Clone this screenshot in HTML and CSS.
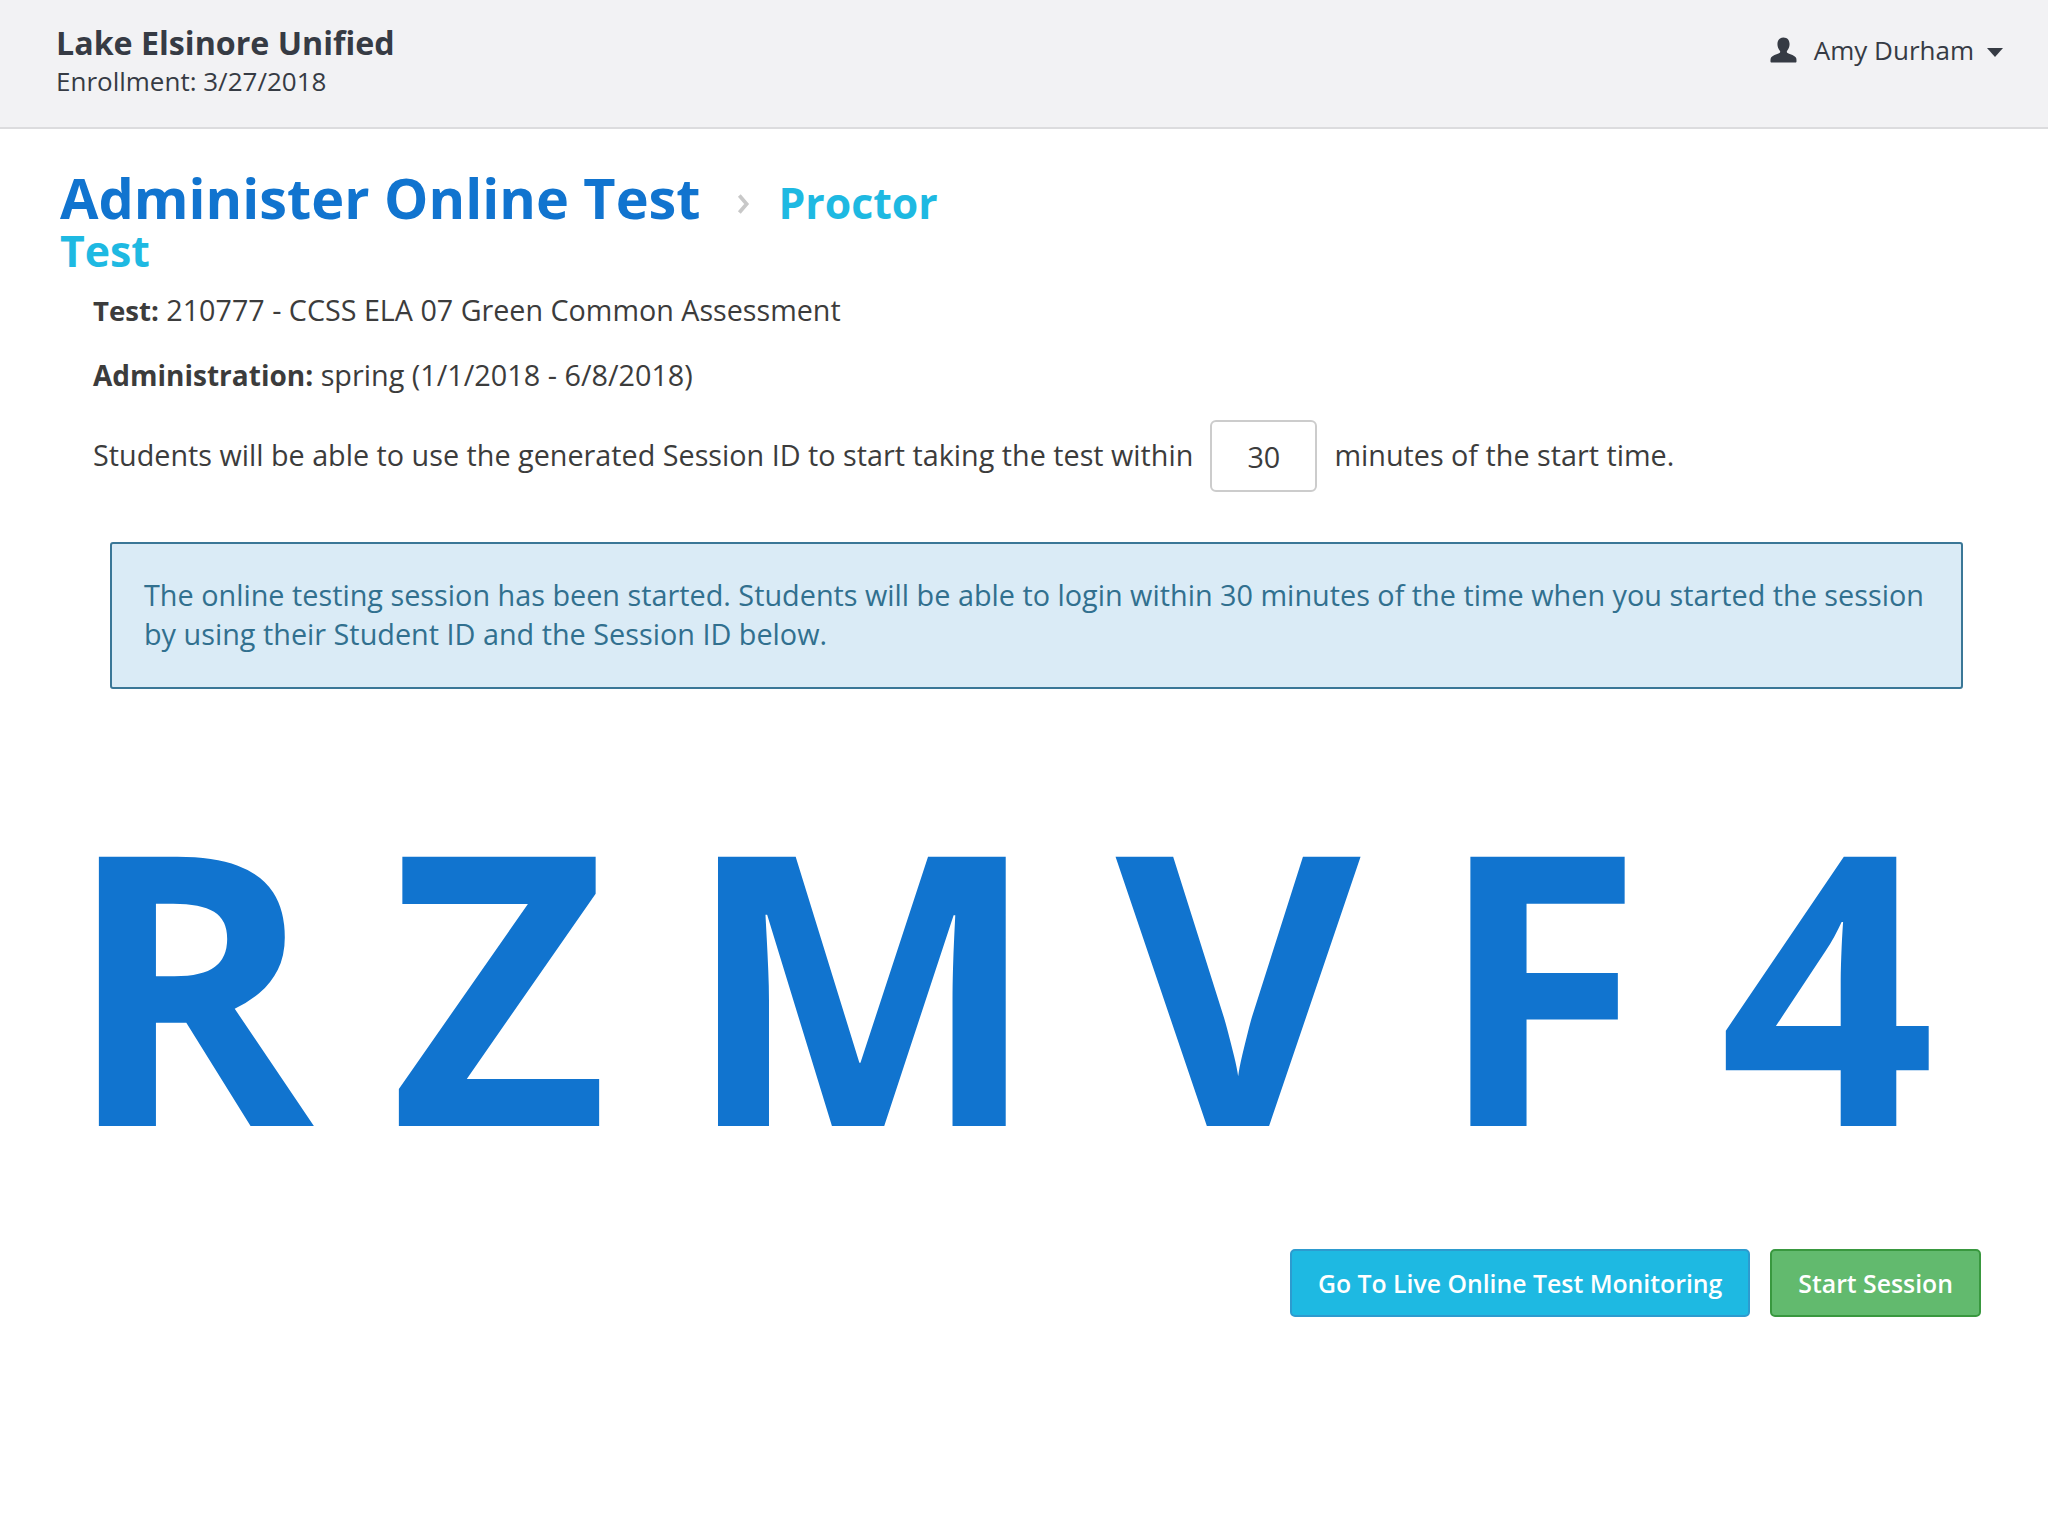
FILE: index.html
```html
<!DOCTYPE html>
<html lang="en">
<head>
<meta charset="utf-8">
<title>Administer Online Test</title>
<link rel="stylesheet" href="styles.css">
</head>
<body>
<header class="topbar">
  <div class="org">
    <div class="org-name">Lake Elsinore Unified</div>
    <div class="org-sub">Enrollment: 3/27/2018</div>
  </div>
  <div class="user">
    <svg class="user-icon" viewBox="0 0 28 26" aria-hidden="true"><path d="M14 0c4 0 6.300 2.900 6.300 6.800 0 2.800-1 5.200-2.500 6.900-.6.700-.5 2 .4 2.500 2.400 1.300 8.100 2.700 9 5.300.3.900.3 2.700.3 3.500 0 .5-.4 1-1 1H1.500c-.6 0-1-.5-1-1 0-.8 0-2.600.3-3.500.9-2.600 6.600-4 9-5.300.9-.5 1-1.800.4-2.500-1.500-1.700-2.500-4.100-2.500-6.900C7.700 2.900 10 0 14 0z"/></svg>
    <span class="user-name">Amy Durham</span>
    <span class="caret"></span>
  </div>
</header>
<main class="page">
  <h1 class="title">
    <span class="title-main">Administer Online Test</span>
    <svg class="crumb" viewBox="0 0 10 18" aria-hidden="true"><path d="M2 2l6 7-6 7"/></svg>
    <span class="title-sub">Proctor Test</span>
  </h1>
  <section class="details">
    <p class="line-test"><b>Test:</b> 210777 - CCSS ELA 07 Green Common Assessment</p>
    <p class="line-admin"><b>Administration:</b> spring (1/1/2018 - 6/8/2018)</p>
    <div class="line-window">
      <span class="window-text">Students will be able to use the generated Session ID to start taking the test within</span>
      <span class="minutes">30</span>
      <span class="window-text">minutes of the start time.</span>
    </div>
  </section>
  <div class="alert">The online testing session has been started. Students will be able to login within 30 minutes of the time when you started the session by using their Student ID and the Session ID below.</div>
  <div class="session-id">
    <span>R</span><span>Z</span><span>M</span><span>V</span><span>F</span><span>4</span>
  </div>
  <div class="actions">
    <a class="btn btn-info">Go To Live Online Test Monitoring</a>
    <a class="btn btn-success">Start Session</a>
  </div>
</main>
</body>
</html>
```

FILE: styles.css
```css
* { box-sizing: border-box; }
html, body { margin: 0; padding: 0; }
body {
  width: 2048px;
  height: 1524px;
  background: #fff;
  color: #3c3c3c;
  font-family: "Open Sans", "Noto Sans", sans-serif;
  font-size: 28.7px;
  overflow: hidden;
}
.topbar {
  height: 129px;
  background: #f2f2f4;
  border-bottom: 2px solid #dcdcde;
  padding: 23px 45px 0 56px;
  display: flex;
  justify-content: space-between;
  align-items: flex-start;
  color: #363b44;
}
.org-name { font-size: 32.2px; font-weight: 700; line-height: 40px; }
.org-sub { font-size: 26px; line-height: 34px; margin-top: 1px; }
.user { display: flex; align-items: center; margin-top: 5px; height: 44px; font-size: 26px; }
.user-icon { width: 27px; height: 26px; fill: #363b44; margin-right: 17px; }
.caret {
  margin-left: 13px;
  margin-top: 4px;
  border-left: 8.500px solid transparent;
  border-right: 8.500px solid transparent;
  border-top: 9px solid #363b44;
}
.page { padding: 0 67px 0 60px; }
.title { margin: 47px 0 0; width: 960px; line-height: 42px; font-weight: 700; }
.title-main { font-size: 55.8px; color: #1174cf; }
.crumb { width: 14px; height: 22px; margin: 0 14px 0 20px; vertical-align: 4px; fill: none; stroke: #c8c8c8; stroke-width: 3; }
.title-sub { font-size: 42.800px; color: #1eb9e2; }
.details { padding-left: 33px; }
.details p { margin: 0; line-height: 40px; }
.details b { font-size: 27.600px; }
.line-test { padding-top: 18px; }
.line-admin { padding-top: 25px; font-size: 28.8px; }
.line-admin b { font-size: 28px; }
.line-window { display: flex; align-items: center; margin-top: 25px; font-size: 28.75px; }
.window-text { padding-bottom: 3px; }
.minutes {
  width: 107px;
  height: 72px;
  margin: 0 17px;
  border: 2px solid #ccc;
  border-radius: 6px;
  display: flex;
  align-items: center;
  justify-content: center;
}
.alert {
  margin: 50px 0 0 50px;
  width: 1853px;
  height: 147px;
  padding: 31px 16px 0 32px;
  background: #daebf6;
  border: 2px solid #3a7797;
  border-radius: 3px;
  color: #31708f;
  font-size: 28.8px;
  line-height: 39px;
}
.session-id {
  margin: 91px 0 0 5px;
  width: 1870px;
  height: 400px;
  display: flex;
  justify-content: space-between;
  align-items: center;
  font-size: 377px;
  line-height: 400px;
  font-weight: 700;
  color: #1174cf;
}
.actions { display: flex; justify-content: flex-end; gap: 20px; margin-top: 69px; }
.btn {
  height: 68px;
  padding: 0 26px;
  display: flex;
  align-items: center;
  border-radius: 5px;
  color: #fff;
  font-weight: 600;
  font-size: 24.800px;
}
.btn-info { background: #1eb9e2; border: 2px solid #2d9bcf; }
.btn-success { background: #62ba6e; border: 2px solid #39983f; }
```
